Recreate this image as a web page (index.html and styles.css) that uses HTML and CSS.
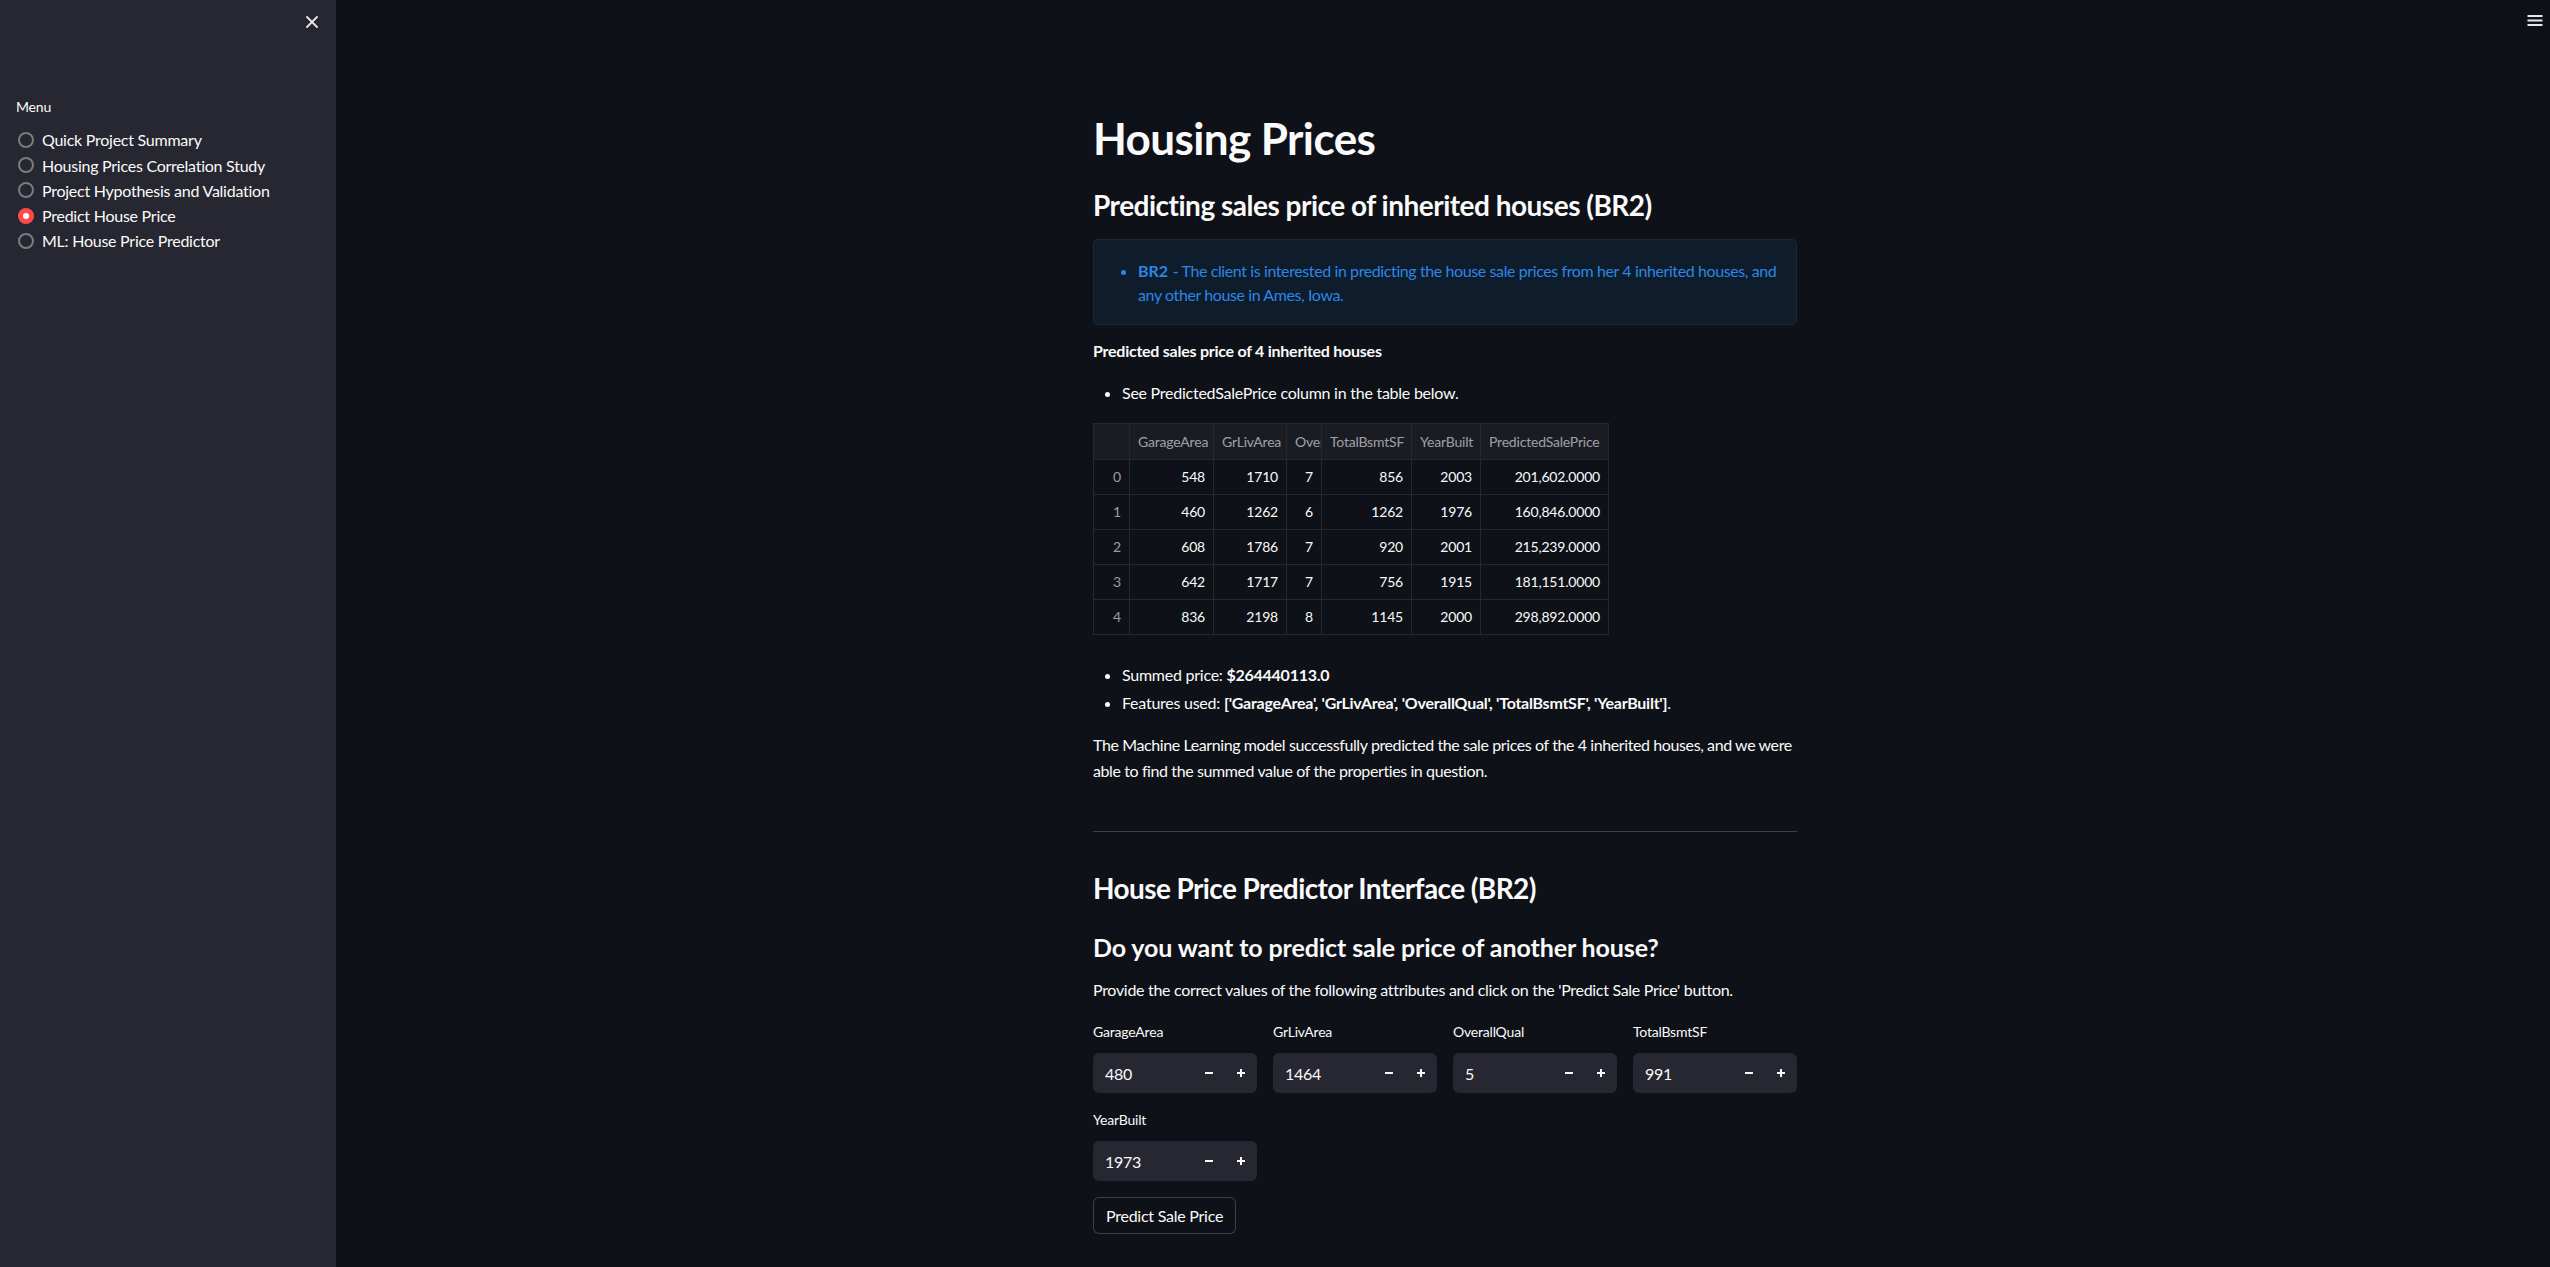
FILE: index.html
```html
<!DOCTYPE html>
<html lang="en">
<head>
<meta charset="utf-8">
<title>Predict House Price</title>
<link rel="stylesheet" href="styles.css">
</head>
<body>
<div class="app">
  <aside class="sidebar">
    <div class="sb-top">
      <button class="close-btn" aria-label="Close sidebar">
        <svg width="12" height="12" viewBox="0 0 12 12"><path d="M1 1L11 11M11 1L1 11" stroke="#e6e6e6" stroke-width="1.8" stroke-linecap="round"/></svg>
      </button>
    </div>
    <div class="sb-label">Menu</div>
    <div class="radios">
      <div class="radio"><span class="dot"></span><span>Quick Project Summary</span></div>
      <div class="radio"><span class="dot"></span><span>Housing Prices Correlation Study</span></div>
      <div class="radio"><span class="dot"></span><span>Project Hypothesis and Validation</span></div>
      <div class="radio checked"><span class="dot"></span><span>Predict House Price</span></div>
      <div class="radio"><span class="dot"></span><span>ML: House Price Predictor</span></div>
    </div>
  </aside>
  <main class="main">
    <div class="hamburger">
      <svg width="16" height="12" viewBox="0 0 16 12"><path d="M0.5 1H15.5M0.5 5.5H15.5M0.5 10H15.5" stroke="#e8e8e8" stroke-width="1.8"/></svg>
    </div>
    <div class="block">
      <h1 class="h1">Housing Prices</h1>
      <h3 class="h3 h3a">Predicting sales price of inherited houses (BR2)</h3>
      <div class="info">
        <ul class="info-list">
          <li><b>BR2</b> - The client is interested in predicting the house sale prices from her 4 inherited houses, and any other house in Ames, Iowa.</li>
        </ul>
      </div>
      <p class="bold-p"><b>Predicted sales price of 4 inherited houses</b></p>
      <ul class="list list1">
        <li>See PredictedSalePrice column in the table below.</li>
      </ul>
      <table class="df">
        <colgroup>
          <col class="c1"><col class="c2"><col class="c3"><col class="c4"><col class="c5"><col class="c6"><col class="c7">
        </colgroup>
        <thead>
          <tr><th></th><th>GarageArea</th><th>GrLivArea</th><th>OverallQual</th><th>TotalBsmtSF</th><th>YearBuilt</th><th>PredictedSalePrice</th></tr>
        </thead>
        <tbody>
          <tr><td class="idx">0</td><td>548</td><td>1710</td><td>7</td><td>856</td><td>2003</td><td>201,602.0000</td></tr>
          <tr><td class="idx">1</td><td>460</td><td>1262</td><td>6</td><td>1262</td><td>1976</td><td>160,846.0000</td></tr>
          <tr><td class="idx">2</td><td>608</td><td>1786</td><td>7</td><td>920</td><td>2001</td><td>215,239.0000</td></tr>
          <tr><td class="idx">3</td><td>642</td><td>1717</td><td>7</td><td>756</td><td>1915</td><td>181,151.0000</td></tr>
          <tr><td class="idx">4</td><td>836</td><td>2198</td><td>8</td><td>1145</td><td>2000</td><td>298,892.0000</td></tr>
        </tbody>
      </table>
      <ul class="list list2">
        <li>Summed price: <b>$264440113.0</b></li>
        <li>Features used: <b>['GarageArea', 'GrLivArea', 'OverallQual', 'TotalBsmtSF', 'YearBuilt']</b>.</li>
      </ul>
      <p class="para">The Machine Learning model successfully predicted the sale prices of the 4 inherited houses, and we were able to find the summed value of the properties in question.</p>
      <hr class="divider">
      <h3 class="h3 h3b">House Price Predictor Interface (BR2)</h3>
      <h4 class="h4">Do you want to predict sale price of another house?</h4>
      <p class="para provide">Provide the correct values of the following attributes and click on the 'Predict Sale Price' button.</p>
      <div class="inputs">
        <div class="field">
          <label class="lbl">GarageArea</label>
          <div class="num"><span class="val">480</span><span class="step"><svg width="10" height="10" viewBox="0 0 10 10"><path d="M1 5H9" stroke="#fafafa" stroke-width="2"/></svg></span><span class="step"><svg width="10" height="10" viewBox="0 0 10 10"><path d="M1 5H9M5 1V9" stroke="#fafafa" stroke-width="2"/></svg></span></div>
        </div>
        <div class="field">
          <label class="lbl">GrLivArea</label>
          <div class="num"><span class="val">1464</span><span class="step"><svg width="10" height="10" viewBox="0 0 10 10"><path d="M1 5H9" stroke="#fafafa" stroke-width="2"/></svg></span><span class="step"><svg width="10" height="10" viewBox="0 0 10 10"><path d="M1 5H9M5 1V9" stroke="#fafafa" stroke-width="2"/></svg></span></div>
        </div>
        <div class="field">
          <label class="lbl">OverallQual</label>
          <div class="num"><span class="val">5</span><span class="step"><svg width="10" height="10" viewBox="0 0 10 10"><path d="M1 5H9" stroke="#fafafa" stroke-width="2"/></svg></span><span class="step"><svg width="10" height="10" viewBox="0 0 10 10"><path d="M1 5H9M5 1V9" stroke="#fafafa" stroke-width="2"/></svg></span></div>
        </div>
        <div class="field">
          <label class="lbl">TotalBsmtSF</label>
          <div class="num"><span class="val">991</span><span class="step"><svg width="10" height="10" viewBox="0 0 10 10"><path d="M1 5H9" stroke="#fafafa" stroke-width="2"/></svg></span><span class="step"><svg width="10" height="10" viewBox="0 0 10 10"><path d="M1 5H9M5 1V9" stroke="#fafafa" stroke-width="2"/></svg></span></div>
        </div>
      </div>
      <div class="inputs row2">
        <div class="field">
          <label class="lbl">YearBuilt</label>
          <div class="num"><span class="val">1973</span><span class="step"><svg width="10" height="10" viewBox="0 0 10 10"><path d="M1 5H9" stroke="#fafafa" stroke-width="2"/></svg></span><span class="step"><svg width="10" height="10" viewBox="0 0 10 10"><path d="M1 5H9M5 1V9" stroke="#fafafa" stroke-width="2"/></svg></span></div>
        </div>
      </div>
      <button class="btn">Predict Sale Price</button>
    </div>
  </main>
</div>
</body>
</html>
```
FILE: styles.css
```css
html, body {
  margin: 0;
  padding: 0;
  height: 100%;
  overflow: hidden;
  background: #0e1117;
  color: #fafafa;
  font-family: Lato, "Noto Sans", sans-serif;
  font-size: 16px;
}

.app {
  display: flex;
  height: 100vh;
}

/* Sidebar */
.sidebar {
  width: 336px;
  flex: 0 0 336px;
  background: #262730;
  box-sizing: border-box;
  padding: 0 16px;
}

.sb-top {
  height: 96px;
  display: flex;
  justify-content: flex-end;
  align-items: flex-start;
  margin-right: -4px;
  padding-top: 10px;
  box-sizing: border-box;
}

.close-btn {
  width: 24px;
  height: 24px;
  border: none;
  background: transparent;
  padding: 0;
  display: flex;
  align-items: center;
  justify-content: center;
}

.sb-label {
  font-size: 14px;
  line-height: 22.4px;
  letter-spacing: -0.2px;
}

.radios {
  margin-top: 9px;
  display: flex;
  flex-direction: column;
}

.radio {
  display: flex;
  align-items: center;
  gap: 8px;
  line-height: 25.2px;
  height: 25.2px;
  font-size: 16px;
  letter-spacing: -0.25px;
}

.dot {
  width: 16px;
  height: 16px;
  box-sizing: border-box;
  border-radius: 50%;
  border: 2px solid rgba(250, 250, 250, 0.4);
  margin-left: 2px;
  flex: 0 0 16px;
  display: flex;
  align-items: center;
  justify-content: center;
}

.radio.checked .dot {
  border-color: #ff4b4b;
  background: #ff4b4b;
}

.radio.checked .dot::after {
  content: "";
  width: 6px;
  height: 6px;
  border-radius: 50%;
  background: #ffffff;
}

/* Main */
.main {
  flex: 1;
  position: relative;
  padding-left: 4px;
}

.hamburger {
  position: absolute;
  top: 15px;
  right: 7px;
  width: 16px;
  height: 12px;
}

.hamburger svg {
  display: block;
}

.block {
  width: 704px;
  margin: 0 auto;
  padding-top: 112px;
  letter-spacing: -0.25px;
}

.h1 {
  margin: 0;
  font-size: 44px;
  line-height: 52.8px;
  font-weight: 700;
  letter-spacing: -0.6px;
}

.h3 {
  margin: 0;
  font-size: 28px;
  line-height: 33.6px;
  font-weight: 700;
  letter-spacing: -0.5px;
}

.h3a { margin-top: 24.4px; }
.h3b { margin-top: 40.2px; letter-spacing: -0.6px; }

.h4 {
  margin: 27.8px 0 0;
  font-size: 25px;
  line-height: 28.8px;
  font-weight: 700;
  letter-spacing: -0.1px;
}

.info {
  margin-top: 16.2px;
  height: 86px;
  box-sizing: border-box;
  background: #0f1c2b;
  border: 1px solid #1a293c;
  border-radius: 5px;
  padding: 19px 8px 0 16px;
  color: #2a87e6;
}

.info-list {
  margin: 0;
  padding-left: 28px;
  line-height: 24.5px;
  letter-spacing: -0.4px;
}

.info-list b {
  font-weight: 700;
  letter-spacing: 0;
  margin-right: 1px;
}

.bold-p {
  margin: 13.2px 0 0;
  line-height: 25.6px;
}

.list {
  margin: 0;
  padding-left: 29px;
  line-height: 25.6px;
}

.list1 { margin-top: 16.4px; }
.list2 { margin-top: 27.2px; }
.list2 li + li { margin-top: 1.8px; }

.df {
  margin-top: 17.2px;
  border-collapse: collapse;
  table-layout: fixed;
  width: 515px;
  font-size: 14px;
  letter-spacing: -0.2px;
}

.c1 { width: 36px; }
.c2 { width: 84px; }
.c3 { width: 73px; }
.c4 { width: 35px; }
.c5 { width: 90px; }
.c6 { width: 69px; }
.c7 { width: 128px; }

.df th, .df td {
  border: 1px solid #26282e;
  padding: 0 8px;
  white-space: nowrap;
  overflow: hidden;
  text-overflow: clip;
}

.df th {
  height: 35px;
  padding: 0 0 0 8px;
  background: #1a1c24;
  color: rgba(250, 250, 250, 0.6);
  font-weight: 400;
  text-align: left;
}

.df td {
  height: 34px;
  text-align: right;
  color: #fafafa;
}

.df td.idx {
  color: rgba(250, 250, 250, 0.6);
}

.para {
  margin: 17px 0 0;
  line-height: 25.6px;
  letter-spacing: -0.4px;
}

.divider {
  margin: 47.6px 0 0;
  border: none;
  height: 1px;
  background: rgba(250, 250, 250, 0.2);
}

.provide { margin-top: 14.8px; letter-spacing: -0.3px; }

.inputs {
  display: grid;
  grid-template-columns: repeat(4, 164px);
  column-gap: 16px;
  margin-top: 18px;
}

.inputs.row2 { margin-top: 16px; }

.field {
  display: flex;
  flex-direction: column;
}

.lbl {
  font-size: 14px;
  line-height: 22.4px;
  letter-spacing: -0.2px;
}

.num {
  margin-top: 10px;
  height: 40px;
  background: #262730;
  border-radius: 6px;
  display: flex;
  align-items: center;
}

.val {
  flex: 1;
  padding-left: 12px;
  font-size: 16px;
}

.step {
  width: 32px;
  height: 40px;
  display: flex;
  align-items: center;
  justify-content: center;
}

.step svg { display: block; }

.btn {
  margin-top: 16px;
  height: 37px;
  padding: 0 12px;
  background: #0e1117;
  color: #fafafa;
  border: 1px solid rgba(250, 250, 250, 0.2);
  border-radius: 6px;
  font-family: Lato, "Noto Sans", sans-serif;
  font-size: 16px;
  letter-spacing: -0.25px;
}
```
